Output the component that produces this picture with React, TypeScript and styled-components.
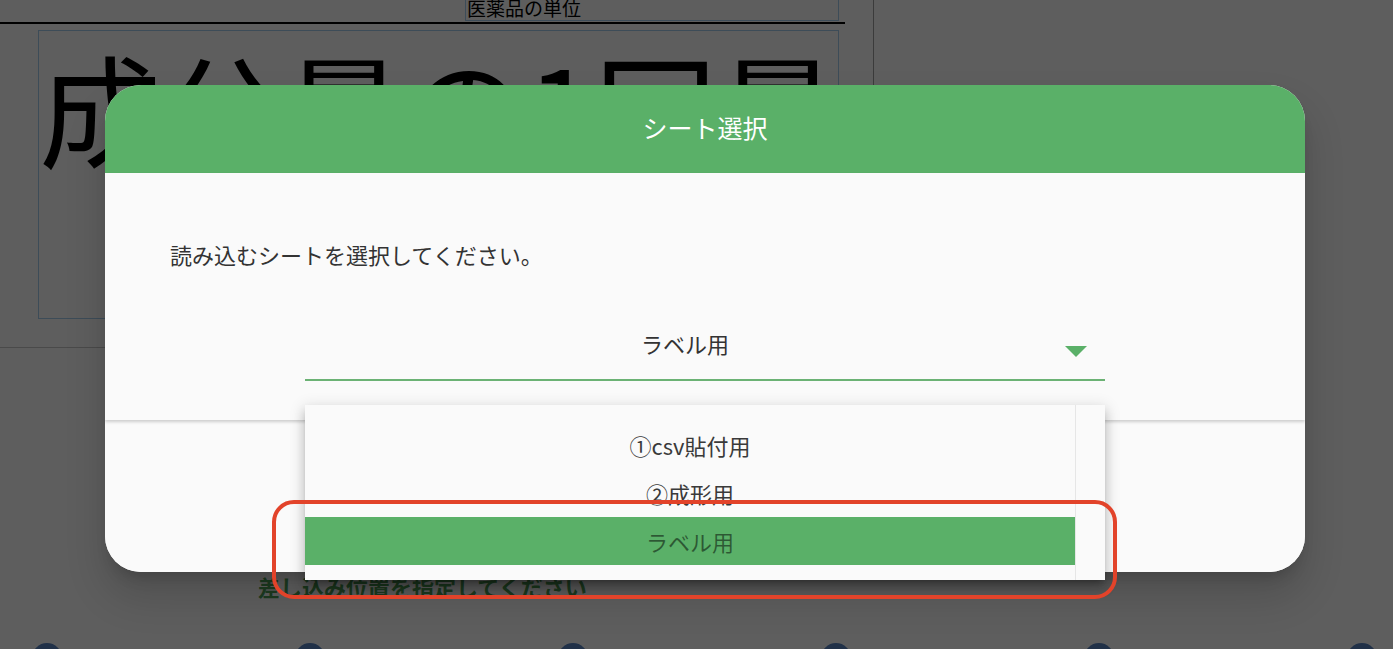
import React from "react";
import styled, { createGlobalStyle } from "styled-components";

const GlobalStyle = createGlobalStyle`
  html, body {
    margin: 0;
    padding: 0;
    background: #ffffff;
    font-family: "Noto Sans CJK JP", "Noto Sans", sans-serif;
  }
  * { box-sizing: border-box; }
`;

const JP = `"Noto Sans CJK JP", "Noto Sans", sans-serif`;

const Page = styled.div`
  position: relative;
  width: 1393px;
  height: 649px;
  overflow: hidden;
  background: #ffffff;
`;

const TopArea = styled.div`
  width: 874px;
  height: 348px;
  border-right: 1px solid #a0a0a0;
  border-bottom: 1px solid #c8c8c8;
  display: flex;
  flex-direction: column;
`;

const UnitBox = styled.div`
  margin-left: 465px;
  width: 374px;
  height: 21px;
  border: 1px solid #a6cdef;
  border-top: none;
  padding-left: 1px;
  font-family: ${JP};
  font-size: 19px;
  line-height: 16px;
  color: #000;
  overflow: visible;
  white-space: nowrap;
`;

const Rule = styled.div`
  margin-top: 1px;
  width: 845px;
  height: 2px;
  background: #000;
`;

const BigBox = styled.div`
  margin-top: 6px;
  margin-left: 38px;
  width: 801px;
  height: 289px;
  border: 1px solid #a6cdef;
  padding-top: 2px;
`;

const BigText = styled.div`
  font-family: ${JP};
  font-size: 122px;
  line-height: 1.2;
  color: #000;
  white-space: nowrap;
`;

const BottomArea = styled.div`
  display: flex;
  flex-direction: column;
`;

const Instruction = styled.div`
  margin-top: 223px;
  margin-left: 258px;
  font-family: ${JP};
  font-size: 22px;
  font-weight: 700;
  line-height: 30px;
  color: #4f9f58;
  white-space: nowrap;
`;

const Dots = styled.div`
  margin-top: 42px;
  margin-left: 32px;
  display: flex;
  gap: 233px;
`;

const Dot = styled.div`
  width: 30px;
  height: 30px;
  border-radius: 50%;
  background: #5b86c4;
  flex: none;
`;

const Backdrop = styled.div`
  position: absolute;
  inset: 0;
  z-index: 1;
  background: rgba(0, 0, 0, 0.63);
  display: flex;
  align-items: flex-start;
  padding: 85px 0 0 105px;
`;

const Dialog = styled.div`
  width: 1200px;
  height: 487px;
  border-radius: 36px;
  overflow: hidden;
  background: #fafafa;
  display: flex;
  flex-direction: column;
  box-shadow: 0 11px 15px -7px rgba(0, 0, 0, 0.2), 0 24px 38px 3px rgba(0, 0, 0, 0.14);
`;

const Header = styled.div`
  height: 88px;
  flex: none;
  background: #5ab068;
  color: #ffffff;
  display: flex;
  align-items: center;
  justify-content: center;
  font-family: ${JP};
  font-size: 25px;
  padding-bottom: 4px;
`;

const Content = styled.div`
  position: relative;
  z-index: 1;
  height: 247px;
  flex: none;
  background: #fafafa;
  padding: 66px 0 0 65px;
  box-shadow: 0 2px 3px rgba(0, 0, 0, 0.18);
`;

const Message = styled.div`
  font-family: ${JP};
  font-size: 22px;
  line-height: 30px;
  color: #333;
`;

const Select = styled.div`
  margin-top: 50px;
  margin-left: 135px;
  width: 800px;
  height: 62px;
  border-bottom: 2px solid #6bb274;
  padding: 0 18px 12px 0;
  display: flex;
  align-items: center;
`;

const SelectValue = styled.div`
  flex: 1;
  text-align: center;
  font-family: ${JP};
  font-size: 22px;
  color: #333;
`;

const Arrow = styled.div`
  width: 0;
  height: 0;
  border-left: 11px solid transparent;
  border-right: 11px solid transparent;
  border-top: 11px solid #5ab068;
  margin-top: 16px;
`;

const Footer = styled.div`
  flex: 1;
  background: #fafafa;
`;

const Menu = styled.div`
  position: absolute;
  z-index: 2;
  left: 305px;
  top: 405px;
  width: 800px;
  height: 175px;
  background: #fafafa;
  display: flex;
  box-shadow: 0 5px 5px -3px rgba(0, 0, 0, 0.2), 0 8px 10px 1px rgba(0, 0, 0, 0.14),
    0 3px 14px 2px rgba(0, 0, 0, 0.12);
`;

const MenuList = styled.div`
  flex: 1;
  padding-top: 16px;
  display: flex;
  flex-direction: column;
`;

const MenuItem = styled.div<{ $selected?: boolean }>`
  height: 48px;
  display: flex;
  align-items: center;
  justify-content: center;
  font-family: ${JP};
  font-size: 22px;
  color: ${(p) => (p.$selected ? "rgba(0,0,0,0.5)" : "#3a3a3a")};
  background: ${(p) => (p.$selected ? "#5ab068" : "transparent")};
`;

const ScrollTrack = styled.div`
  width: 30px;
  border-left: 1px solid #e6e6e6;
  background: #fafafa;
`;

const Annotation = styled.div`
  position: absolute;
  z-index: 3;
  left: 272px;
  top: 500px;
  width: 845px;
  height: 99px;
  border: 4px solid #e2432a;
  border-radius: 22px;
  pointer-events: none;
`;

export default function App() {
  const dots = [0, 1, 2, 3, 4, 5];
  return (
    <>
      <GlobalStyle />
      <Page>
        <TopArea>
          <UnitBox>医薬品の単位</UnitBox>
          <Rule />
          <BigBox>
            <BigText>成分量の1回量</BigText>
          </BigBox>
        </TopArea>
        <BottomArea>
          <Instruction>差し込み位置を指定してください</Instruction>
          <Dots>
            {dots.map((d) => (
              <Dot key={d} />
            ))}
          </Dots>
        </BottomArea>

        <Backdrop>
          <Dialog>
            <Header>シート選択</Header>
            <Content>
              <Message>読み込むシートを選択してください。</Message>
              <Select>
                <SelectValue>ラベル用</SelectValue>
                <Arrow />
              </Select>
            </Content>
            <Footer />
          </Dialog>
        </Backdrop>

        <Menu>
          <MenuList>
            <MenuItem>①csv貼付用</MenuItem>
            <MenuItem>②成形用</MenuItem>
            <MenuItem $selected>ラベル用</MenuItem>
          </MenuList>
          <ScrollTrack />
        </Menu>
        <Annotation />
      </Page>
    </>
  );
}
